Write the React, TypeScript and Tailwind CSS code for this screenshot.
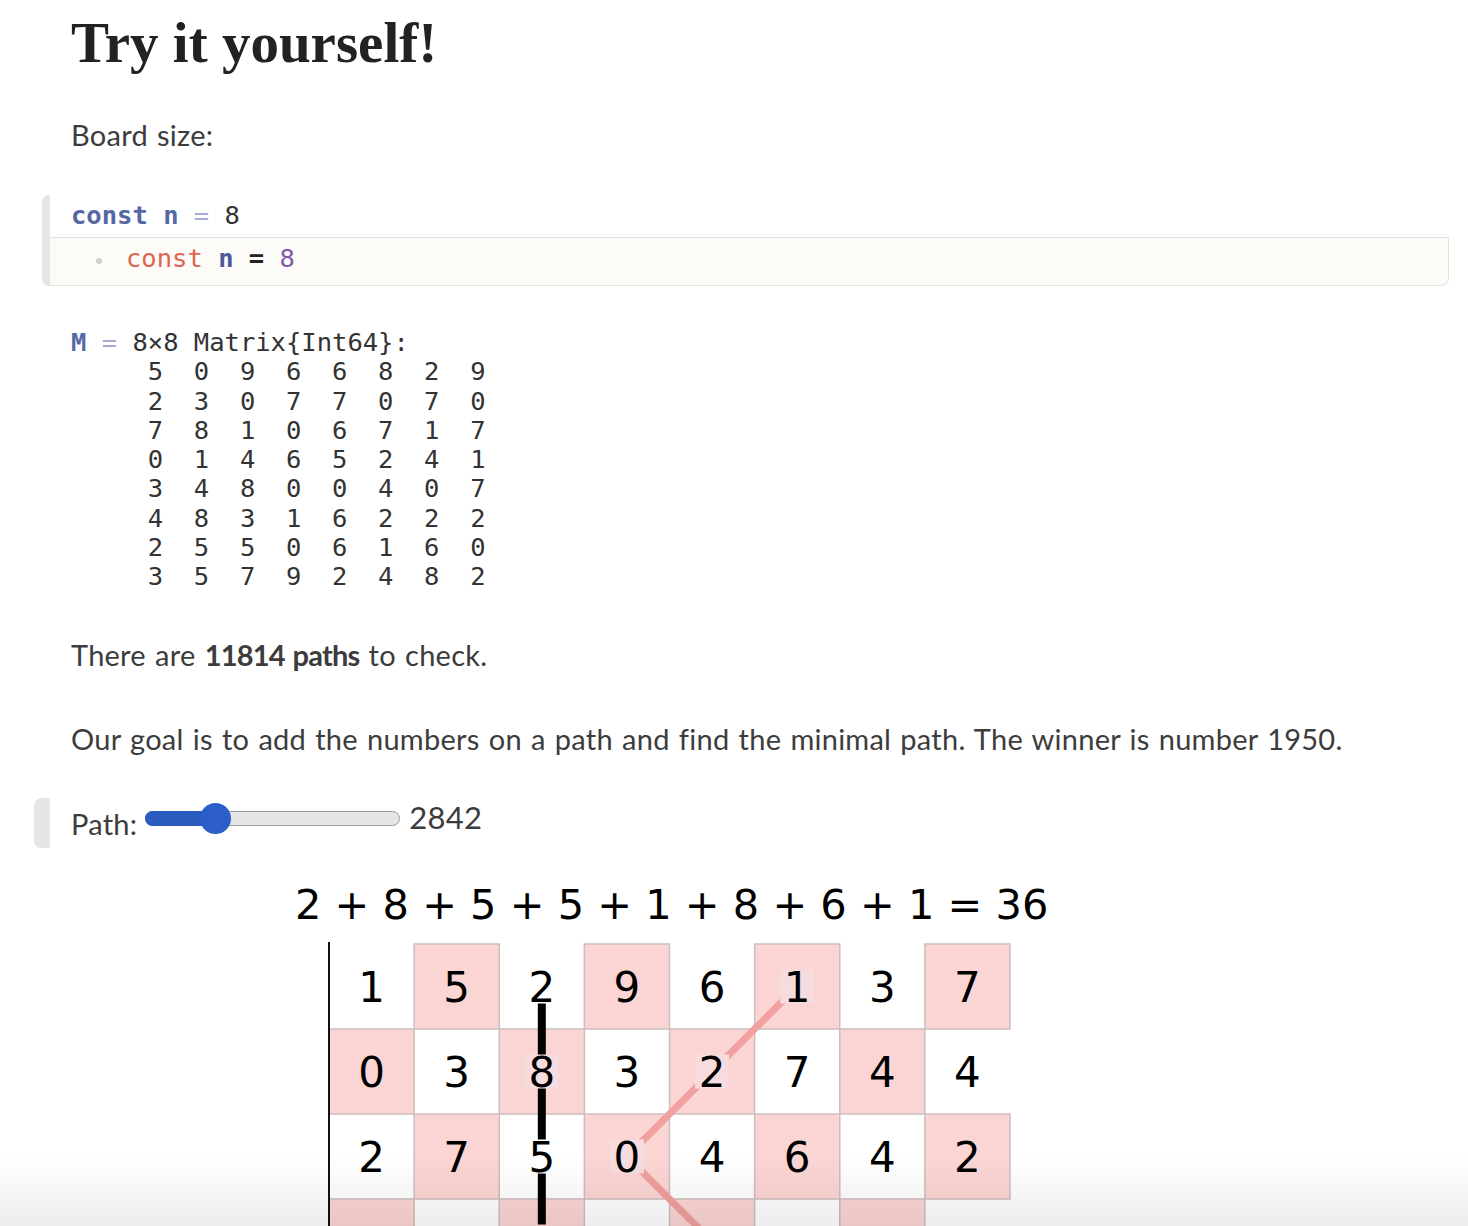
import React from "react";

const MATRIX = [
  [5, 0, 9, 6, 6, 8, 2, 9],
  [2, 3, 0, 7, 7, 0, 7, 0],
  [7, 8, 1, 0, 6, 7, 1, 7],
  [0, 1, 4, 6, 5, 2, 4, 1],
  [3, 4, 8, 0, 0, 4, 0, 7],
  [4, 8, 3, 1, 6, 2, 2, 2],
  [2, 5, 5, 0, 6, 1, 6, 0],
  [3, 5, 7, 9, 2, 4, 8, 2],
];

// only the first three rows are on screen; row 3 is cut by the window
const BOARD = [
  [1, 5, 2, 9, 6, 1, 3, 7],
  [0, 3, 8, 3, 2, 7, 4, 4],
  [2, 7, 5, 0, 4, 6, 4, 2],
];

const CW = 85.125;
const CH = 85;

// cells on the current (black) path and on the winning (pink) path
const blackPath = [0, 1, 2].map((r) => [r, 2]);
const pinkPath = [
  [0, 5],
  [1, 4],
  [2, 3],
];

const cx = (c: number) => c * CW + CW / 2;
const cy = (r: number) => r * CH + CH / 2;

const sans = {
  fontFamily: "Lato, 'Noto Sans', sans-serif",
  wordSpacing: "1.5px",
  letterSpacing: "0.25px",
};
const mono = { fontFamily: "'DejaVu Sans Mono', 'Liberation Mono', monospace" };

function Board() {
  const labelled = [...blackPath, ...pinkPath];
  const isLabelled = (r: number, c: number) =>
    labelled.some(([a, b]) => a === r && b === c);

  return (
    <svg width="720" height="290" className="block" viewBox="-9 -2 720 290">
      {[0, 1, 2, 3].map((r) =>
        [0, 1, 2, 3, 4, 5, 6, 7].map((c) =>
          (r + c) % 2 === 1 ? (
            <rect
              key={`bg-${r}-${c}`}
              x={c * CW}
              y={r * CH}
              width={CW}
              height={CH}
              fill="#fbd5d3"
              stroke="#cdbebe"
              strokeWidth="1.5"
            />
          ) : null
        )
      )}
      <line x1="0" y1="-2" x2="0" y2="300" stroke="#111" strokeWidth="2" />
      <line
        x1={cx(2)}
        y1={cy(0)}
        x2={cx(2)}
        y2={cy(4)}
        stroke="#000"
        strokeWidth="8"
      />
      {/* gap in the black line behind the row-3 label, just off screen */}
      <rect x={cx(2) - 17} y={cy(3) - 17} width="34" height="34" fill="#fbd5d3" />
      <polyline
        points={[...pinkPath, [3, 4], [4, 5]]
          .map(([r, c]) => `${cx(c)},${cy(r)}`)
          .join(" ")}
        fill="none"
        stroke="#f0a09e"
        strokeWidth="7"
      />
      {BOARD.map((row, r) =>
        row.map((v, c) => (
          <g key={`t-${r}-${c}`}>
            {isLabelled(r, c) && (
              <rect
                x={cx(c) - 17}
                y={cy(r) - 17}
                width="34"
                height="34"
                fill={(r + c) % 2 === 1 ? "#f7dcdf" : "#ffffff"}
              />
            )}
            <text
              x={cx(c)}
              y={cy(r) + 15.5}
              textAnchor="middle"
              fontSize="42"
              fill="#000"
              style={{ fontFamily: "'DejaVu Sans', sans-serif" }}
            >
              {v}
            </text>
          </g>
        ))
      )}
    </svg>
  );
}

export default function App() {
  return (
    <div className="relative h-[1226px] overflow-hidden bg-white text-[#3c3c3c]">
      <h1
        className="ml-[71px] mt-[11px] text-[57px] leading-[64px] font-bold text-[#222]"
        style={{ fontFamily: "'Liberation Serif', serif" }}
      >
        Try it yourself!
      </h1>

      <p className="ml-[71px] mt-[42px] text-[29px] leading-[36px]" style={sans}>
        Board size:
      </p>

      {/* code cell */}
      <div className="mt-[42px] ml-[42px] mr-[19px] flex h-[91px]">
        <div className="w-[8px] rounded-l-[7px] bg-[#e6e6e6]" />
        <div className="flex flex-1 flex-col">
          <div
            className="pl-[21px] pt-[6px] h-[42px] text-[25.5px] leading-[29px] whitespace-pre"
            style={mono}
          >
            <span className="font-bold text-[#5668a4]">const</span>{" "}
            <span className="font-bold text-[#5668a4]">n</span>{" "}
            <span className="text-[#a3abd2]">=</span>{" "}
            <span className="text-[#333]">8</span>
          </div>
          <div className="flex h-[49px] items-start rounded-br-[8px] border border-l-0 border-[#e2e1db] bg-[#fcfbf7] pl-[46px] pt-[6px]">
            <span className="mt-[14px] h-[6px] w-[6px] rounded-full bg-[#d0d0d0]" />
            <span className="ml-[24px] text-[25.5px] leading-[29px] whitespace-pre" style={mono}>
              <span className="text-[#e06450]">const</span>{" "}
              <span className="font-bold text-[#4a5a9d]">n</span>{" "}
              <span className="font-bold text-[#222]">=</span>{" "}
              <span className="text-[#7d5aa8]">8</span>
            </span>
          </div>
        </div>
      </div>

      {/* matrix output */}
      <pre
        className="ml-[71px] mt-[42px] text-[25.5px] leading-[29.3px] text-[#333]"
        style={mono}
      >
        <span className="font-bold text-[#5668a4]">M</span>{" "}
        <span className="text-[#a3abd2]">=</span> 8×8 Matrix{"{"}Int64{"}"}:
        {MATRIX.map((row) => "\n     " + row.join("  "))}
      </pre>

      <p className="ml-[71px] mt-[45px] text-[29px] leading-[36px]" style={sans}>
        There are{" "}
        <b className="font-bold tracking-[-0.8px]">11814 paths</b> to check.
      </p>

      <p className="ml-[71px] mt-[48px] text-[29px] leading-[36px]" style={sans}>
        Our goal is to add the numbers on a path and find the minimal path. The
        winner is number 1950.
      </p>

      {/* slider cell */}
      <div className="mt-[41px] ml-[34px] flex h-[50px]">
        <div className="w-[16px] rounded-l-[7px] bg-[#e6e6e6]" />
        <div className="flex items-start pl-[21px]">
          <span className="mt-[8px] text-[29px] leading-[36px]" style={sans}>
            Path:
          </span>
          <div className="relative ml-[8px] mt-[13px] h-[15px] w-[255px] rounded-full border border-[#9a9a9a] bg-[#e6e6e6]">
            <div className="absolute -left-px -top-px h-[15px] w-[71px] rounded-l-full bg-[#2a5cc0]" />
            <div className="absolute left-[54px] top-[-9px] h-[31px] w-[31px] rounded-full bg-[#2b5fc7]" />
          </div>
          <span className="ml-[9px] mt-[1px] text-[31px] leading-[36px]" style={sans}>
            2842
          </span>
        </div>
      </div>

      {/* plot */}
      <div
        className="ml-[295px] mt-[33px] text-[41.5px] leading-[48px] text-black whitespace-pre"
        style={{ fontFamily: "'DejaVu Sans', sans-serif" }}
      >
        2 + 8 + 5 + 5 + 1 + 8 + 6 + 1 = 36
      </div>
      <div className="ml-[320px] mt-[13px]">
        <Board />
      </div>

      <div className="pointer-events-none absolute inset-x-0 bottom-0 h-[70px] bg-gradient-to-b from-transparent to-black/[0.07]" />
    </div>
  );
}
